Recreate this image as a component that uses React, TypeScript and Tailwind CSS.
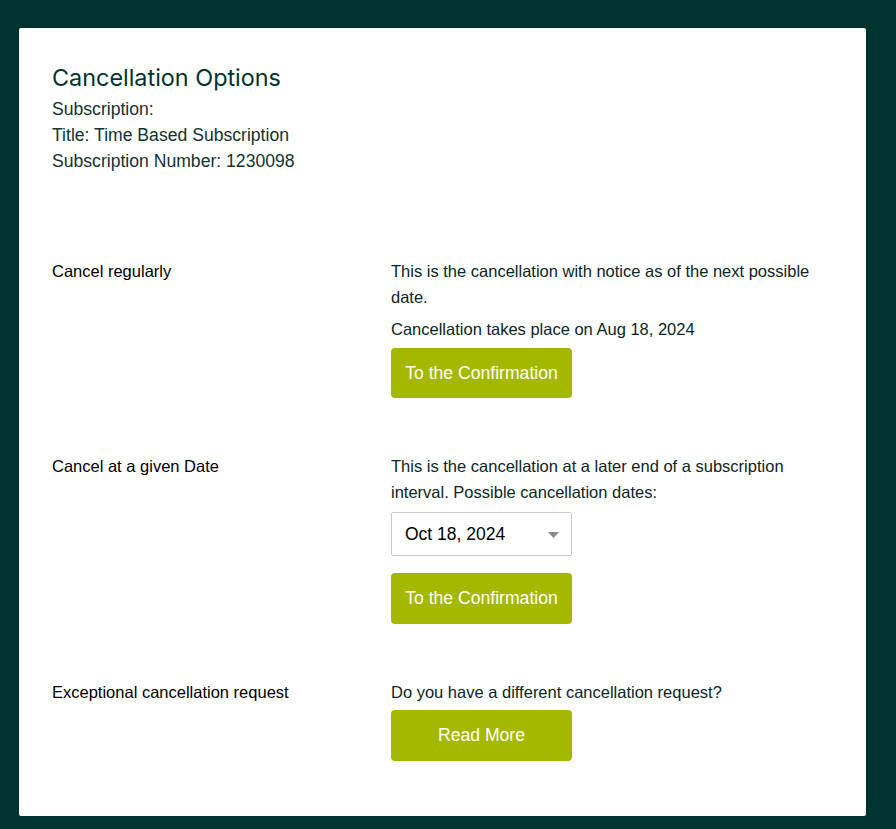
export default function App() {
  return (
    <div className="min-h-[829px] bg-[#00332f] pl-[19px] pr-[30px] pt-[28px] pb-[13px]" style={{ fontFamily: '"Liberation Sans", Arial, sans-serif' }}>
      <div className="rounded-[2px] bg-white px-[33px] pt-[36px] pb-[55px] text-[#0b2624]">
        <h1 className="text-[23.4px] leading-[28px] text-[#00332f]" style={{ fontFamily: 'Inter, "Liberation Sans", sans-serif' }}>
          Cancellation Options
        </h1>
        <div className="mt-[4px] text-[17.6px] leading-[26px] text-[#123230]">
          <p>Subscription:</p>
          <p>Title: Time Based Subscription</p>
          <p>Subscription Number: 1230098</p>
        </div>

        <div className="mt-[84px] flex flex-col gap-[55px] text-[16.5px]">
          <div className="grid grid-cols-[339px_1fr]">
            <div className="leading-[26px] text-black">Cancel regularly</div>
            <div>
              <p className="leading-[26px] text-[#0b2624]">This is the cancellation with notice as of the next possible date.</p>
              <p className="mt-[6px] leading-[26px] text-[#0b2624]">Cancellation takes place on Aug 18, 2024</p>
              <button className="mt-[6px] h-[50px] w-[181px] rounded-[4px] bg-[#a4b800] text-[17.6px] text-white">
                To the Confirmation
              </button>
            </div>
          </div>

          <div className="grid grid-cols-[339px_1fr]">
            <div className="leading-[26px] text-black">Cancel at a given Date</div>
            <div>
              <p className="leading-[26px] text-[#0b2624]">
                This is the cancellation at a later end of a subscription interval. Possible cancellation dates:
              </p>
              <div className="relative mt-[7px] flex h-[44px] w-[181px] items-center rounded-[2px] border border-[#c8c8c8] pl-[13px] text-[17.5px] text-black">
                Oct 18, 2024
                <svg className="absolute right-[12px] top-[19px]" width="11" height="6" viewBox="0 0 11 6">
                  <path d="M0 0h11L5.5 6z" fill="#8a8a8a" />
                </svg>
              </div>
              <button className="mt-[17px] h-[51px] w-[181px] rounded-[4px] bg-[#a4b800] text-[17.6px] text-white">
                To the Confirmation
              </button>
            </div>
          </div>

          <div className="grid grid-cols-[339px_1fr]">
            <div className="leading-[26px] text-black">Exceptional cancellation request</div>
            <div>
              <p className="leading-[26px] text-[#0b2624]">Do you have a different cancellation request?</p>
              <button className="mt-[5px] h-[51px] w-[181px] rounded-[4px] bg-[#a4b800] text-[17.6px] text-white">
                Read More
              </button>
            </div>
          </div>
        </div>
      </div>
    </div>
  );
}
